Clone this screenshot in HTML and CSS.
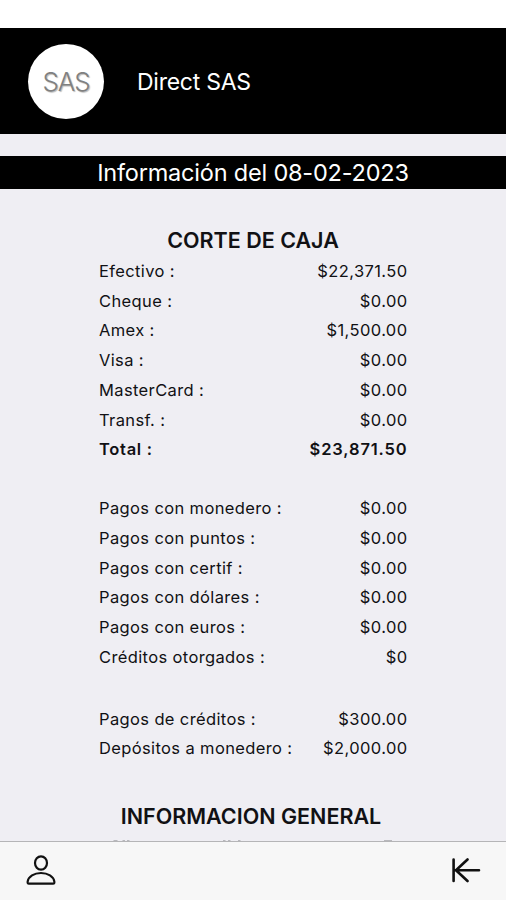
FILE: index.html
```html
<!DOCTYPE html>
<html lang="es">
<head>
<meta charset="utf-8">
<title>Direct SAS</title>
<link rel="stylesheet" href="styles.css">
</head>
<body>
<header class="header">
  <div class="logo">SAS</div>
  <h1 class="name">Direct SAS</h1>
</header>
<main class="content">
  <div class="date">Información del 08-02-2023</div>
  <h2 class="title">CORTE DE CAJA</h2>
  <dl class="rows">
    <div class="row"><dt>Efectivo :</dt><dd>$22,371.50</dd></div>
    <div class="row"><dt>Cheque :</dt><dd>$0.00</dd></div>
    <div class="row"><dt>Amex :</dt><dd>$1,500.00</dd></div>
    <div class="row"><dt>Visa :</dt><dd>$0.00</dd></div>
    <div class="row"><dt>MasterCard :</dt><dd>$0.00</dd></div>
    <div class="row"><dt>Transf. :</dt><dd>$0.00</dd></div>
    <div class="row total"><dt>Total :</dt><dd>$23,871.50</dd></div>
  </dl>
  <dl class="rows payments">
    <div class="row"><dt>Pagos con monedero :</dt><dd>$0.00</dd></div>
    <div class="row"><dt>Pagos con puntos :</dt><dd>$0.00</dd></div>
    <div class="row"><dt>Pagos con certif :</dt><dd>$0.00</dd></div>
    <div class="row"><dt>Pagos con dólares :</dt><dd>$0.00</dd></div>
    <div class="row"><dt>Pagos con euros :</dt><dd>$0.00</dd></div>
    <div class="row"><dt>Créditos otorgados :</dt><dd>$0</dd></div>
  </dl>
  <dl class="rows credits">
    <div class="row"><dt>Pagos de créditos :</dt><dd>$300.00</dd></div>
    <div class="row"><dt>Depósitos a monedero :</dt><dd>$2,000.00</dd></div>
  </dl>
  <h2 class="title general">INFORMACION GENERAL</h2>
  <svg class="peek" viewBox="0 0 506 2" width="506" height="2"><path d="M113.500 1h4M122.500 1h2.500M127 1h2.500M223 1h2.500M228 1h2.500M238 1h2.500M384 1h8"/></svg>
</main>
<nav class="tabs">
  <svg class="icon" viewBox="0 0 30 32" width="30" height="32"><ellipse cx="15" cy="8" rx="6" ry="6.700"/><path d="M3 28.700C1.600 28.700 1.500 27.800 1.700 26.400C2.500 21.500 8 18 15 18S27.500 21.500 28.300 26.400C28.500 27.800 28.400 28.700 27 28.700Z"/></svg>
  <svg class="icon arrow" viewBox="0 0 30 26" width="30" height="26"><path d="M2.600 1.500V23M4 12.300H28M16.500 1.500L5 12.300L16.500 23"/></svg>
</nav>
</body>
</html>
```
FILE: styles.css
```css
* { box-sizing: border-box; margin: 0; }
body {
  height: 900px;
  overflow: hidden;
  display: flex;
  flex-direction: column;
  background: #efeef3;
  color: #111114;
  font-family: Inter, sans-serif;
}
.header {
  height: 134px;
  flex: none;
  border-top: 28px solid #fff;
  background: #000;
  display: flex;
  align-items: center;
  padding: 0 28px;
  gap: 33px;
}
.logo {
  width: 76px;
  height: 75px;
  border-radius: 50%;
  background: #fff;
  display: flex;
  align-items: center;
  justify-content: center;
  font-size: 26px;
  font-weight: 300;
  color: #808080;
  letter-spacing: -1.2px;
  text-shadow: 1px 1px 1px #bbb;
}
.name { font-size: 23px; line-height: 30px; padding-top: 1px; font-weight: 400; color: #fff; letter-spacing: -0.25px; }
.content { flex: 1; min-height: 0; overflow: hidden; padding-top: 22px; }
.date {
  height: 33px;
  line-height: 34px;
  background: #000;
  color: #fff;
  font-size: 23.5px;
  letter-spacing: -0.2px;
  text-align: center;
}
.title {
  margin-top: 36px;
  line-height: 31px;
  font-size: 21.5px;
  font-weight: 600;
  text-align: center;
}
.rows { margin: 1px 98.500px 0 99px; font-size: 16.5px; line-height: 29.7px; letter-spacing: 0.37px; }
.row { display: flex; justify-content: space-between; white-space: nowrap; }
.row dd { letter-spacing: 0.4px; }
.total { font-weight: 600; }
.total dt { letter-spacing: 0.7px; }
.total dd { letter-spacing: 0.85px; }
.payments { margin-top: 29.4px; }
.credits { margin-top: 32px; }
.general { margin-top: 37.3px; padding-right: 4px; }
.peek { display: block; margin-top: 8px; stroke: #b8b8bc; stroke-width: 2; }
.tabs {
  height: 59px;
  flex: none;
  border-top: 1px solid #b5b5b7;
  background: #f7f7f7;
  display: flex;
  align-items: center;
  justify-content: space-between;
  padding: 0 25px 0 26px;
}
.icon { fill: none; stroke: #111; stroke-width: 2.2; stroke-linecap: round; stroke-linejoin: round; }
.arrow { stroke-width: 2.6; }
```
